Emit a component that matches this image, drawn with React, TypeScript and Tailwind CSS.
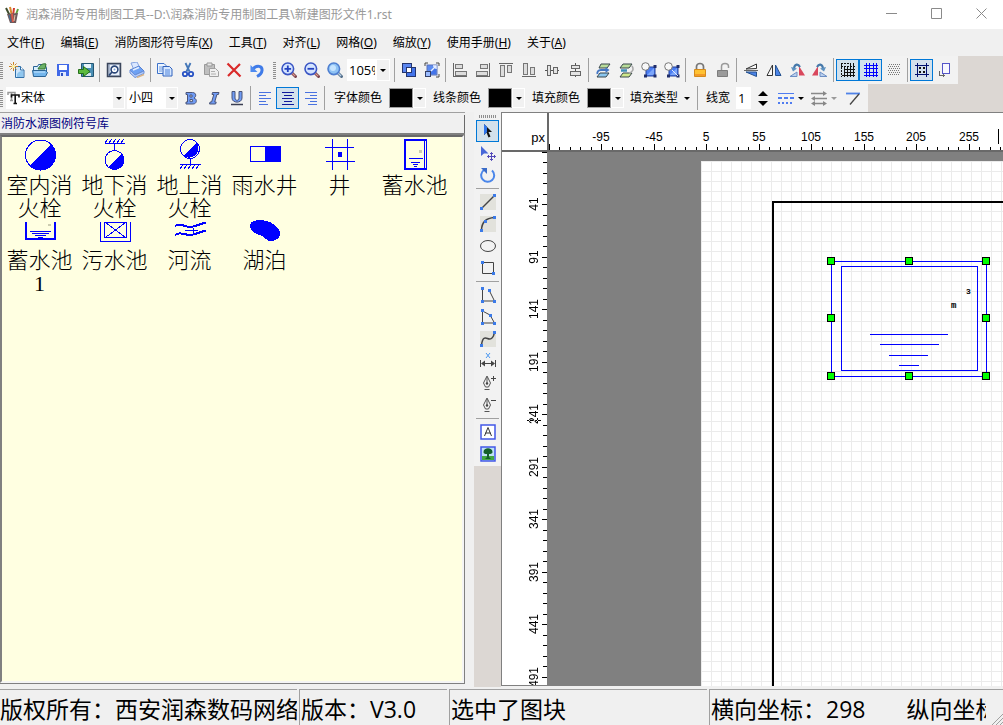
import { useEffect, useState } from 'react';
import type { ReactNode } from 'react';
import clsx from 'clsx';

interface IconProps {
  children: ReactNode;
  crisp?: boolean;
}

function Icon({ children, crisp = false }: IconProps) {
  return (
    <svg
      width="16"
      height="16"
      viewBox="0 0 16 16"
      fill="none"
      aria-hidden="true"
      className="block shrink-0"
      shapeRendering={crisp ? 'crispEdges' : 'auto'}
    >
      {children}
    </svg>
  );
}

interface ToolProps {
  label: string;
  active?: boolean;
  children: ReactNode;
}

function Tool({ label, active = false, children }: ToolProps) {
  return (
    <button
      type="button"
      title={label}
      aria-label={label}
      aria-pressed={active}
      className={clsx(
        'flex h-[22px] w-[23px] shrink-0 items-center justify-center border',
        active ? 'border-[#0078d7] bg-[#d3e1ec]' : 'border-transparent hover:bg-[#e5f1fb]',
      )}
    >
      {children}
    </button>
  );
}

function Separator() {
  return (
    <span className="flex h-6 w-[5px] shrink-0 justify-center">
      <span className="w-px bg-[#a0a0a0]" />
    </span>
  );
}

function Grip() {
  return (
    <span className="flex h-[17px] w-[3px] shrink-0 flex-col justify-between">
      {Array.from({ length: 9 }, (_, i) => (
        <span key={i} className="h-px bg-[#8f8f8f]" />
      ))}
    </span>
  );
}

function Triangle({ muted = false }: { muted?: boolean }) {
  return (
    <svg width="6" height="3" viewBox="0 0 6 3" aria-hidden="true" className="block shrink-0">
      <path d="M0 0h6L3 3z" fill={muted ? '#9a9a9a' : '#000'} />
    </svg>
  );
}

/* ---------- shared icon parts ---------- */

const magnifier = (
  <>
    <path d="M10.5 10.5l4 4" stroke="#7b4650" strokeWidth="3" strokeLinecap="round" />
    <path d="M10.8 10.8l3.4 3.4" stroke="#e09a8c" strokeWidth="1.2" />
    <circle cx="6.8" cy="6.8" r="5.8" fill="#d4e4ff" stroke="#3a55c4" strokeWidth="1.6" />
  </>
);

const groupShape = (
  <>
    <rect x="5" y="5" width="9" height="9" fill="#4a7df2" stroke="#23409c" />
    <path d="M6 13L13 6v7z" fill="#7ca6fb" />
    <path d="M12.5 3h3v3h-3zM3 12.500h3v3H3zM12.500 12.500h3v3h-3z" fill="#1f2d6a" />
    <circle cx="4.5" cy="4.5" r="3.8" fill="#f8f8f8" stroke="#777" />
  </>
);

const nib = (
  <>
    <path d="M7 1L3.5 8l2 4h3l2-4z" fill="#f4f4f4" stroke="#555" />
    <path d="M7 2v6M4.5 14.5h5" stroke="#555" />
    <circle cx="7" cy="8.5" r="1.2" fill="#444" />
  </>
);

/* ---------- toolbars ---------- */

function FileTools() {
  return (
    <>
      <Tool label="新建">
        <Icon>
          <path d="M6.5 4.5h5l3.5 3.5v7.5H6.5z" fill="#cfe6fb" stroke="#2f6fa8" />
          <path d="M8 12c2-3 4-3 6-3v6H8z" fill="#8fc6ee" />
          <path d="M11.5 4.5V8H15" fill="#fff" stroke="#2f6fa8" />
          <path d="M4.5 0v9M0 4.5h9M1.5 1.5l6 6M7.5 1.5l-6 6" stroke="#c9822b" />
          <circle cx="4.5" cy="4.5" r="1.8" fill="#fff3a8" />
        </Icon>
      </Tool>
      <Tool label="打开">
        <Icon>
          <path d="M1.500 14V4.500h4l1-2h6l2 3V9" fill="#d9efff" stroke="#2b6394" />
          <path d="M6 7c2-4 5-6 8-5l-1 5z" fill="#6cb267" stroke="#34722f" />
          <path d="M.5 8.500h13l2 2-2 4H1.500z" fill="#74b6ec" stroke="#2b6394" />
          <path d="M2 10h11" stroke="#c7e6ff" />
        </Icon>
      </Tool>
      <Tool label="保存">
        <Icon crisp>
          <path d="M2 2h12v12H2z" fill="#4169e8" />
          <path d="M4 3h8v5H4z" fill="#fff" />
          <path d="M5 10h6v4H5z" fill="#dfe8ff" />
          <path d="M6 11h2v3H6z" fill="#2e50c0" />
        </Icon>
      </Tool>
      <Tool label="导出">
        <Icon>
          <path d="M3.5 1.5h12v13h-12z" fill="#4b8fb5" stroke="#245673" />
          <path d="M6 2h7v4H6z" fill="#e7f5fb" />
          <path d="M7 11h6v3H7z" fill="#d4e6ef" />
          <path d="M.5 7.500h5V4.500l6.500 5-6.500 5v-3h-5z" fill="#5cbb3f" stroke="#256f1a" />
        </Icon>
      </Tool>
      <Separator />
      <Tool label="打印预览">
        <Icon>
          <path d="M1.5 1.5h13v13h-13z" fill="#aebbd0" stroke="#3b465b" strokeWidth="1.5" />
          <path d="M4 3h9v10H4z" fill="#e9f0fa" />
          <circle cx="8.5" cy="7.500" r="3.4" fill="#fff" stroke="#2b4778" strokeWidth="1.6" />
          <circle cx="8.5" cy="7.500" r="1" fill="#7aa2dc" />
          <path d="M6 10l-3 3.500" stroke="#2b4778" strokeWidth="1.8" />
        </Icon>
      </Tool>
      <Tool label="打印">
        <Icon>
          <path d="M2 1l6-1 3 6-6 2z" fill="#dbe8ff" stroke="#86a4e0" />
          <path d="M1 8l9-4 5 5-9 4z" fill="#6ea2f4" stroke="#5780d0" />
          <path d="M1 8v3l5 4.500 9-4V9l-9 4z" fill="#b5cdfa" stroke="#6b8fd8" />
          <path d="M4 8l6-2.500" stroke="#e6f0ff" strokeWidth="1.5" />
          <path d="M8 15.500l7-3" stroke="#d8b58a" strokeWidth="1.5" />
        </Icon>
      </Tool>
      <Separator />
      <Tool label="复制">
        <Icon>
          <path d="M.5 1.5h6.500l2 2v8H.5z" fill="#edf5ff" stroke="#3d72ca" />
          <path d="M2 5h5M2 7h5M2 9h3" stroke="#6f9be0" />
          <path d="M6 4.500h6.500l2.500 2.500v7H6z" fill="#d6e7ff" stroke="#3162bd" />
          <path d="M8 8h5M8 10h5M8 12h5" stroke="#4f83dc" />
        </Icon>
      </Tool>
      <Tool label="剪切">
        <Icon>
          <path d="M5.5 1l4 8.5M10.5 1l-4 8.5" stroke="#4477b8" strokeWidth="1.8" />
          <circle cx="5" cy="12" r="2.2" stroke="#2953c4" strokeWidth="1.8" />
          <circle cx="11" cy="12" r="2.2" stroke="#2953c4" strokeWidth="1.8" />
        </Icon>
      </Tool>
      <Tool label="粘贴">
        <Icon>
          <path d="M1.5 2.5h10v10h-10z" fill="#bfbfbf" stroke="#999" />
          <path d="M4 1h5v3H4z" fill="#e6e6e6" stroke="#999" />
          <path d="M6.5 6.5h6l3 3v5h-9z" fill="#efefef" stroke="#a0a0a0" />
          <path d="M8 9.5h4M8 12h5" stroke="#b0b0b0" />
        </Icon>
      </Tool>
      <Tool label="删除">
        <Icon>
          <path d="M1.5 1.5l13 13M14 2L2 14" stroke="#d92a2a" strokeWidth="2.2" />
        </Icon>
      </Tool>
      <Tool label="撤销">
        <Icon>
          <path d="M4 7c4-4.500 9.500-3 9 1.500-.3 3-2 4.500-5 6" stroke="#3f7be8" strokeWidth="3" />
          <path d="M1.5 3v7h7z" fill="#4d8af0" />
        </Icon>
      </Tool>
    </>
  );
}

function ViewTools() {
  return (
    <>
      <Tool label="放大">
        <Icon>
          {magnifier}
          <path d="M3.5 6.8h6.600M6.800 3.500v6.600" stroke="#2442c0" strokeWidth="1.8" />
        </Icon>
      </Tool>
      <Tool label="缩小">
        <Icon>
          {magnifier}
          <path d="M3.5 6.8h6.600" stroke="#2442c0" strokeWidth="1.8" />
        </Icon>
      </Tool>
      <Tool label="适合窗口">
        <Icon>
          <path d="M10.5 10.5l4 4" stroke="#54708c" strokeWidth="3" strokeLinecap="round" />
          <path d="M11 11l3 3" stroke="#b9d1e8" strokeWidth="1.2" />
          <circle cx="6.8" cy="6.8" r="5.8" fill="#8fc3f4" stroke="#4e7ed0" strokeWidth="1.6" />
          <circle cx="6" cy="6" r="3" fill="#c6e4ff" />
        </Icon>
      </Tool>
      <div className="ml-px mr-[2px] flex h-[22px] w-[43px] shrink-0 bg-white">
        <input
          aria-label="缩放比例"
          defaultValue="105%"
          className="w-[30px] border-r-2 border-white bg-white pl-[2px] font-['Open_Sans'] text-[13px] leading-[20px] outline-none"
        />
        <button type="button" aria-label="选择缩放比例" className="my-px flex w-3 items-center justify-center bg-[#f1f1f1]">
          <Triangle />
        </button>
      </div>
      <Separator />
      <Tool label="置于顶层">
        <Icon crisp>
          <rect x="1.5" y="1.5" width="9" height="9" fill="#5b86ef" stroke="#24356e" />
          <rect x="5.5" y="5.5" width="9" height="9" fill="#4374ea" stroke="#24356e" />
          <rect x="5.5" y="5.5" width="5" height="5" fill="#fff" stroke="#24356e" />
        </Icon>
      </Tool>
      <Tool label="置于底层">
        <Icon>
          <rect x="3" y="3" width="10" height="10" fill="#5c8bf0" stroke="#5a72b8" />
          <path d="M4 12l8-8v8z" fill="#4374ea" />
          <rect x="1.5" y="9.500" width="5" height="5" fill="#9bbcff" stroke="#344067" />
          <path d="M1 4V1h3M12 1h3v3M15 12v3h-3" stroke="#444" />
          <path d="M7 9l5-5M9 4h3v3" stroke="#e9f1ff" strokeWidth="1.4" />
        </Icon>
      </Tool>
      <Separator />
      <Tool label="左对齐">
        <Icon crisp>
          <path d="M1.5 1v14M2 14.5h13" stroke="#666" />
          <rect x="3.5" y="2.5" width="7" height="4" fill="#ddd" stroke="#777" />
          <rect x="3.5" y="9.5" width="11" height="4" fill="#ddd" stroke="#777" />
        </Icon>
      </Tool>
      <Tool label="右对齐">
        <Icon crisp>
          <path d="M14.5 1v14M1 14.5h13" stroke="#666" />
          <rect x="5.5" y="2.5" width="7" height="4" fill="#ddd" stroke="#777" />
          <rect x="1.5" y="9.5" width="11" height="4" fill="#ddd" stroke="#777" />
        </Icon>
      </Tool>
      <Tool label="顶对齐">
        <Icon crisp>
          <path d="M1 1.5h14" stroke="#666" />
          <rect x="2.5" y="3.5" width="4" height="11" fill="#ddd" stroke="#777" />
          <rect x="9.5" y="3.5" width="4" height="7" fill="#ddd" stroke="#777" />
        </Icon>
      </Tool>
      <Tool label="底对齐">
        <Icon crisp>
          <path d="M1 14.5h14" stroke="#666" />
          <rect x="2.5" y="1.5" width="4" height="11" fill="#ddd" stroke="#777" />
          <rect x="9.5" y="5.5" width="4" height="7" fill="#ddd" stroke="#777" />
        </Icon>
      </Tool>
      <Tool label="水平居中">
        <Icon crisp>
          <path d="M1 8.5h14" stroke="#555" />
          <rect x="3.5" y="3.5" width="3" height="10" fill="#e4e4e4" stroke="#666" />
          <rect x="9.5" y="5.5" width="4" height="6" fill="#e4e4e4" stroke="#666" />
        </Icon>
      </Tool>
      <Tool label="垂直居中">
        <Icon crisp>
          <path d="M8.5 1v14" stroke="#555" />
          <rect x="4.5" y="3.5" width="8" height="3" fill="#e4e4e4" stroke="#666" />
          <rect x="3.5" y="9.5" width="10" height="4" fill="#e4e4e4" stroke="#666" />
        </Icon>
      </Tool>
      <Separator />
      <Tool label="上移一层">
        <Icon>
          <path d="M6 2h9l-3 4H4z" fill="#b9dc9a" stroke="#39474d" />
          <path d="M5 11h9l-3 4H2z" fill="#8bc6ef" stroke="#39474d" />
          <path d="M12 8H6c-3 0-4 2-3.500 4" stroke="#4477c4" strokeWidth="2" />
          <path d="M14.500 8l-4-3v6z" fill="#4477c4" />
        </Icon>
      </Tool>
      <Tool label="下移一层">
        <Icon>
          <path d="M5 2h9l-3 4H2z" fill="#b9dc9a" stroke="#39474d" />
          <path d="M5 11h9l-3 4H2z" fill="#cfe88a" stroke="#39474d" />
          <path d="M3 8.500h6" stroke="#3f8fb8" strokeWidth="2.5" />
          <path d="M14 4c2 3 1 6-3 7" stroke="#aaa" strokeWidth="1.6" />
        </Icon>
      </Tool>
      <Tool label="组合">
        <Icon>{groupShape}</Icon>
      </Tool>
      <Tool label="取消组合">
        <Icon>
          {groupShape}
          <path d="M8 8l6 6" stroke="#dfe8ff" />
        </Icon>
      </Tool>
      <Separator />
      <Tool label="锁定">
        <Icon>
          <path d="M4.5 8V4.500a3.500 3 0 017 0V8" stroke="#777" strokeWidth="1.7" />
          <path d="M2.5 7.500h11v7h-11z" fill="#ffc233" stroke="#d48a1c" />
          <path d="M3 12h10v2H3z" fill="#f39a28" />
        </Icon>
      </Tool>
      <Tool label="解锁">
        <Icon>
          <path d="M6.5 8V4.500a3.500 3 0 017 0V6" stroke="#999" strokeWidth="1.5" />
          <path d="M2.5 8.500h10v6h-10z" fill="#9b9b9b" stroke="#7d7d7d" />
        </Icon>
      </Tool>
      <Separator />
      <Tool label="垂直翻转">
        <Icon>
          <path d="M13.5 2v4.500L3 7z" fill="#fafafa" stroke="#333" />
          <path d="M13.5 14.5v-4.500H3z" fill="#4c84e8" stroke="#24518f" />
          <path d="M1 8.5h14" stroke="#666" />
        </Icon>
      </Tool>
      <Tool label="水平翻转">
        <Icon>
          <path d="M6.5 3v10.500H1z" fill="#fafafa" stroke="#333" />
          <path d="M9.5 3v10.500H15z" fill="#4c84e8" stroke="#24518f" />
        </Icon>
      </Tool>
      <Tool label="向左旋转">
        <Icon>
          <path d="M10 4l6 9.500h-6z" fill="#d9485d" />
          <path d="M1 14.500h7V10z" fill="#bcd0ee" stroke="#6d8fc4" />
          <path d="M11 5C9 1.500 6 2 5 6" stroke="#4779aa" strokeWidth="2.2" />
          <path d="M2 5l2 4.500L8 6.500z" fill="#5d91c0" />
        </Icon>
      </Tool>
      <Tool label="向右旋转">
        <Icon>
          <path d="M6 4L0 13.500h6z" fill="#d9485d" />
          <path d="M15 14.500H8V10z" fill="#bcd0ee" stroke="#6d8fc4" />
          <path d="M5 5c2-3.500 5-3 6 1" stroke="#4779aa" strokeWidth="2.2" />
          <path d="M14 5l-2 4.500L8 6.500z" fill="#5d91c0" />
        </Icon>
      </Tool>
      <Separator />
      <Tool label="对齐网格" active>
        <Icon crisp>
          <path d="M4.500 5v10M7.500 5v10M10.500 1v14M13.500 1v14M4 7.500h11M4 10.500h11M2 13.500h13" stroke="#111" />
          <path d="M1.500 2v13M1 1.500h9M1 4.500h14" stroke="#111" strokeDasharray="2 1" />
        </Icon>
      </Tool>
      <Tool label="显示网格" active>
        <Icon crisp>
          <path d="M3.5 1v14M6.5 1v14M10.5 1v14M13.5 1v14M1 3.5h14M1 6.5h14M1 10.5h14M1 13.5h14" stroke="#0000ff" />
        </Icon>
      </Tool>
      <Tool label="点状网格">
        <Icon crisp>
          {[2, 4, 6, 8, 10, 12].map((y) => (
            <path key={y} d={`M${y % 4 ? 3 : 2} ${y + 0.5}h12`} stroke="#777" strokeDasharray="1 1" />
          ))}
        </Icon>
      </Tool>
      <Separator />
      <Tool label="边框" active>
        <Icon crisp>
          <path d="M3.5 1v14M12.5 1v14M1 3.5h14M1 12.5h14" stroke="#00106e" />
          <path d="M5 5h2v2H5zM9 5h2v2H9zM5 9h2v2H5zM9 9h2v2H9z" fill="#111" />
        </Icon>
      </Tool>
      <Tool label="页面方向">
        <Icon crisp>
          <path d="M5.5 1.5h7v10h-7z" fill="#f7f7ff" stroke="#5454c8" />
          <path d="M2.5 9v4.500H8M6 12v3" stroke="#666" />
        </Icon>
      </Tool>
    </>
  );
}

interface ColorPickerProps {
  label: string;
}

function ColorPicker({ label }: ColorPickerProps) {
  return (
    <>
      <span className="shrink-0 px-[7px]">{label}</span>
      <button
        type="button"
        aria-label={label}
        className="h-5 w-6 shrink-0 border border-[#a0a0a0] bg-black"
      />
      <button
        type="button"
        aria-label={`选择${label}`}
        className="flex h-5 w-[13px] shrink-0 items-center justify-center border border-white bg-[#f1f1f1]"
      >
        <Triangle />
      </button>
    </>
  );
}

function AlignIcon({ kind }: { kind: 'left' | 'center' | 'right' }) {
  const lines = {
    left: 'M2 2.5h12M2 5.5h7M2 8.5h12M2 11.5h7M2 14.5h9',
    center: 'M2 2.5h12M4 5.5h8M2 8.5h12M4 11.5h8M2 14.5h12',
    right: 'M2 2.5h12M7 5.5h7M2 8.5h12M7 11.5h7M5 14.5h9',
  };
  return (
    <Icon crisp>
      <path d={lines[kind]} stroke={kind === 'center' ? '#101a9c' : '#4a72e0'} />
    </Icon>
  );
}

function FormatTools() {
  return (
    <>
      <div className="flex h-[22px] w-[119px] shrink-0 items-center bg-white">
        <svg width="14" height="14" viewBox="0 0 14 14" aria-hidden="true" className="ml-px shrink-0">
          <path d="M1 4V1.500h7V4M4.500 1.500V9M3 9.500h3" stroke="#999" fill="none" strokeWidth="1.5" />
          <path d="M4.500 6.500V4H12v2.500M8.200 4v8M6.500 12.500H10" stroke="#111" fill="none" strokeWidth="1.6" />
        </svg>
        <select aria-label="字体" className="h-5 w-[92px] appearance-none bg-white outline-none">
          <option>宋体</option>
        </select>
        <span className="flex h-5 w-[11px] items-center justify-center bg-[#f1f1f1]">
          <Triangle />
        </span>
      </div>
      <div className="ml-[2px] mr-px flex h-[22px] w-[51px] shrink-0 items-center bg-white">
        <select aria-label="字号" className="h-5 w-[39px] appearance-none bg-white pl-[2px] outline-none">
          <option>小四</option>
        </select>
        <span className="flex h-5 w-[11px] items-center justify-center bg-[#f1f1f1]">
          <Triangle />
        </span>
      </div>
      <Tool label="加粗">
        <Icon>
          <path
            d="M3 2.500h6.500c4 0 4 4.500 1.500 5.500 3.500 1 3 6-1 6H3v-2h1.500v-7.500H3zM7 5v2h2V5zM7 9.500v2.200h2.400V9.500z"
            fill="#6f9bf5"
            stroke="#4a5478"
            fillRule="evenodd"
          />
        </Icon>
      </Tool>
      <Tool label="斜体">
        <Icon>
          <path d="M6.5 2.500H13l-.6 2h-1.500l-2.200 7.500h1.500l-.6 2H3.500l.6-2h1.500l2.200-7.500H6z" fill="#6f9bf5" stroke="#4a5478" />
        </Icon>
      </Tool>
      <Tool label="下划线">
        <Icon>
          <path d="M3 1.500h3V8c0 3 4 3 4 0V1.500h3V8c0 5.500-10 5.500-10 0z" fill="#6f9bf5" stroke="#4a5478" />
          <path d="M2 14.5h12" stroke="#3a3f52" strokeWidth="1.5" />
        </Icon>
      </Tool>
      <Separator />
      <Tool label="文字左对齐">
        <AlignIcon kind="left" />
      </Tool>
      <Tool label="文字居中" active>
        <AlignIcon kind="center" />
      </Tool>
      <Tool label="文字右对齐">
        <AlignIcon kind="right" />
      </Tool>
      <Separator />
      <ColorPicker label="字体颜色" />
      <ColorPicker label="线条颜色" />
      <ColorPicker label="填充颜色" />
      <button type="button" className="flex h-[22px] w-[71px] shrink-0 items-center gap-[6px] pl-[6px]">
        填充类型
        <Triangle />
      </button>
      <Separator />
      <label htmlFor="line-width" className="shrink-0 px-[6px]">
        线宽
      </label>
      <input
        id="line-width"
        defaultValue="1"
        className="h-[22px] w-[15px] shrink-0 bg-white pl-[2px] font-['Open_Sans'] text-[13px] outline-none"
      />
      <span className="flex h-[22px] w-6 shrink-0 flex-col items-center justify-center gap-[5px]">
        <button type="button" aria-label="增加线宽">
          <svg width="10" height="5" viewBox="0 0 10 5" className="block">
            <path d="M5 0l5 5H0z" />
          </svg>
        </button>
        <button type="button" aria-label="减小线宽">
          <svg width="10" height="5" viewBox="0 0 10 5" className="block">
            <path d="M5 5L0 0h10z" />
          </svg>
        </button>
      </span>
      <button type="button" aria-label="线型" className="flex h-[22px] w-8 shrink-0 items-center justify-center gap-1">
        <Icon crisp>
          <path d="M0 3.5h16" stroke="#4f7cf0" />
          <path d="M0 8h16" stroke="#4f7cf0" strokeWidth="2" strokeDasharray="4 2" />
          <path d="M0 13h16" stroke="#4f7cf0" strokeWidth="2" strokeDasharray="2 2" />
        </Icon>
        <Triangle />
      </button>
      <button type="button" aria-label="箭头样式" className="flex h-[22px] w-[34px] shrink-0 items-center justify-center gap-1">
        <Icon>
          <path d="M0 3.5h13M3 8.5h13M2 13.5h12" stroke="#888" strokeWidth="1.5" />
          <path d="M12 1l4 2.500L12 6zM4 6L0 8.500 4 11zM12 11l4 2.500-4 2.500zM4 11l-4 2.500L4 16z" fill="#888" />
        </Icon>
        <Triangle muted />
      </button>
      <Tool label="折线">
        <Icon>
          <path d="M1 3.5h14" stroke="#4f82e8" strokeWidth="1.8" />
          <path d="M14 4L5 14.5" stroke="#444" strokeWidth="1.3" />
        </Icon>
      </Tool>
    </>
  );
}

/* ---------- drawing tools ---------- */

const node = (x: number, y: number) => <rect key={`${x}-${y}`} x={x} y={y} width="3" height="3" fill="#3b7ae8" />;

function HorizontalRule() {
  return (
    <span className="flex h-[5px] w-[23px] flex-col justify-center">
      <span className="h-px bg-[#a0a0a0]" />
    </span>
  );
}

function DrawingTools() {
  return (
    <div className="flex w-full flex-col items-center bg-[#f2f2f2] pt-[3px] pb-px">
      <span className="mb-[2px] flex h-[3px] w-[17px] justify-between">
        {Array.from({ length: 9 }, (_, i) => (
          <span key={i} className="w-px bg-[#8f8f8f]" />
        ))}
      </span>
      <Tool label="选择" active>
        <Icon>
          <path d="M4 1v11l2.500-2.500 2 5 2-1-2-4.500H12z" fill="#111" />
          <path d="M4 1v11l3-3V4z" fill="#2e74ec" />
        </Icon>
      </Tool>
      <Tool label="移动">
        <Icon>
          <path d="M1 1v10l3-2.500h4.500z" fill="#4868d8" />
          <path d="M11.5 7.500v8M7.500 11.500h8M10 9l1.500-1.500L13 9M10 14l1.500 1.500L13 14M9 10l-1.500 1.500L9 13M14 10l1.500 1.500L14 13" stroke="#5148b8" />
        </Icon>
      </Tool>
      <Tool label="旋转">
        <Icon>
          <path d="M12 3.5A6.500 6.500 0 114 3" stroke="#4a86ea" strokeWidth="2" />
          <path d="M1 1h6v6z" fill="#3a6cc8" />
        </Icon>
      </Tool>
      <HorizontalRule />
      <Tool label="直线">
        <Icon>
          <path d="M0 0h16v16H0z" fill="#e2e2dc" />
          <path d="M1.5 14.5l13-13" stroke="#444" strokeWidth="1.5" />
          {node(0, 13)}
          {node(13, 0)}
        </Icon>
      </Tool>
      <Tool label="弧线">
        <Icon>
          <path d="M0 0h16v16H0z" fill="#e2e2dc" />
          <path d="M1.5 14.5c0-8 5-12.500 13-13" stroke="#444" strokeWidth="1.5" />
          {node(0, 13)}
          {node(4, 4)}
          {node(13, 0)}
        </Icon>
      </Tool>
      <Tool label="椭圆">
        <Icon>
          <ellipse cx="8" cy="8" rx="7.5" ry="5.5" stroke="#444" />
        </Icon>
      </Tool>
      <Tool label="矩形">
        <Icon>
          <path d="M2.5 2.5h11v11h-11z" stroke="#444" />
          {node(1, 1)}
          {node(12, 12)}
        </Icon>
      </Tool>
      <HorizontalRule />
      <Tool label="折线">
        <Icon>
          <path d="M2.5 2v12h12L9.500 4" stroke="#444" />
          {node(1, 0)}
          {node(1, 13)}
          {node(13, 13)}
          {node(8, 2)}
        </Icon>
      </Tool>
      <Tool label="多边形">
        <Icon>
          <path d="M2.5 2v12h12L10 6z" stroke="#444" />
          {node(1, 0)}
          {node(1, 13)}
          {node(13, 13)}
          {node(9, 5)}
        </Icon>
      </Tool>
      <Tool label="曲线">
        <Icon>
          <path d="M0 0h16v16H0z" fill="#e2e2dc" />
          <path d="M1.5 14c1-7 3-8 6-6.500s6 0 7-6.500" stroke="#444" strokeWidth="1.5" />
          {node(0, 13)}
          {node(13, 0)}
        </Icon>
      </Tool>
      <Tool label="标注尺寸">
        <Icon>
          <path d="M6 0l4 5M10 0L6 5" stroke="#4a96f0" />
          <path d="M.5 7v7M15.500 7v7M2 10.500h12" stroke="#444" />
          <path d="M1 10.500l4-3v6zM15 10.500l-4-3v6z" fill="#444" />
        </Icon>
      </Tool>
      <Tool label="添加节点">
        <Icon>
          {nib}
          <path d="M11 3.500h5M13.500 1v5" stroke="#444" />
        </Icon>
      </Tool>
      <Tool label="删除节点">
        <Icon>
          {nib}
          <path d="M11 3.500h5" stroke="#444" />
        </Icon>
      </Tool>
      <HorizontalRule />
      <Tool label="文字">
        <Icon>
          <path d="M1 1h14v14H1z" fill="#fff" stroke="#4358e8" strokeWidth="1.5" />
          <path d="M4.5 12L8 3.500 11.500 12M5.500 9h5" stroke="#333" />
        </Icon>
      </Tool>
      <Tool label="图片">
        <Icon>
          <path d="M1 1h14v14H1z" fill="#bfe2f5" stroke="#4358e8" strokeWidth="1.5" />
          <path d="M2 10h12v4H2z" fill="#43a843" />
          <path d="M3.5 6c0-5 9-5 9 0 0 2-3 2-3.500 2v3l2 2H5l2-2V8c-1 0-3.500 0-3.500-2z" fill="#14602a" />
        </Icon>
      </Tool>
    </div>
  );
}

/* ---------- symbol library ---------- */

const symbols: { name: string; drawing: ReactNode }[] = [
  {
    name: '室内消火栓',
    drawing: (
      <>
        <circle cx="16.5" cy="16" r="15" fill="none" stroke="#00f" />
        <path d="M5.5 27L27 5.500A15 15 0 015.500 27z" fill="#00f" />
      </>
    ),
  },
  {
    name: '地下消火栓',
    drawing: (
      <>
        <path d="M6 4.500h20M15.500 5v7M6 4l3-4M10 4l3-4M14 4l3-4M18 4l3-4M22 4l3-4" stroke="#00f" />
        <circle cx="15.5" cy="21" r="9.5" fill="none" stroke="#00f" />
        <path d="M9 28L22.500 14.500A9.500 9.500 0 019 28z" fill="#00f" />
      </>
    ),
  },
  {
    name: '地上消火栓',
    drawing: (
      <>
        <path d="M6 25.500h21M16.500 20v5M6 30l3-4M10 30l3-4M14 30l3-4M18 30l3-4M22 30l3-4" stroke="#00f" />
        <circle cx="16" cy="10" r="9.5" fill="none" stroke="#00f" />
        <path d="M9.5 17L22.500 3.500A9.500 9.500 0 019.500 17z" fill="#00f" />
      </>
    ),
  },
  {
    name: '雨水井',
    drawing: (
      <>
        <path d="M1.5 7.500h30v15h-30z" fill="none" stroke="#00f" />
        <path d="M16 7h16v16H16z" fill="#00f" />
      </>
    ),
  },
  {
    name: '井',
    drawing: (
      <>
        <path d="M8.5 0v31M23.500 0v31M1 8.500h29M2 22.500h29" stroke="#00f" />
        <path d="M14 13h4v5h-4z" fill="#00f" />
      </>
    ),
  },
  {
    name: '蓄水池',
    drawing: (
      <>
        <path d="M6 1h22M6 0v31M5 30h23" stroke="#00f" strokeWidth="2" />
        <path d="M25.5 0v31M27.500 0v31M10 19.500h14M12 23.500h9M14 25.500h5M15 27.500h3" stroke="#00f" />
        <path d="M20 11h3v3h-3z" fill="#ccccb0" />
      </>
    ),
  },
  {
    name: '蓄水池1',
    drawing: (
      <>
        <path d="M2 8v18M1 25h31M31 8v18" stroke="#00f" strokeWidth="2" />
        <path d="M6 17.500h21M8 19.500h17M11 21.500h11M14 23.500h5" stroke="#00f" />
        <path d="M24 10h3v2h-3z" fill="#ccccb0" />
      </>
    ),
  },
  {
    name: '污水池',
    drawing: (
      <path
        d="M1.5 8v19.500h30V8M5.500 8.500h22v15h-22zM7 9l19 14M26 9L7 23"
        fill="none"
        stroke="#00f"
      />
    ),
  },
  {
    name: '河流',
    drawing: (
      <>
        <path d="M1 12c5-4 9 1 15 1s10-4 16-4" fill="none" stroke="#00f" strokeWidth="2" />
        <path d="M1 21c5-4 9 0 15 0s10-4 16-4" fill="none" stroke="#00f" strokeWidth="2" />
        <path d="M11 16.500h13M19 14v5" stroke="#00f" />
      </>
    ),
  },
  {
    name: '湖泊',
    drawing: (
      <path d="M1 12c0-4 4-6 10-6 9 0 20 6 20 14 0 4-4 7-9 7-4 0-6-3-9-5C7 20 1 17 1 12z" fill="#00f" />
    ),
  },
];

function SymbolLibrary() {
  return (
    <section className="flex w-[465px] flex-col border-t border-[#a0a0a0]">
      <h2 className="mt-[2px] h-[18px] border-r border-[#696969] pl-px text-xs leading-[18px] text-[#000080]">
        消防水源图例符号库
      </h2>
      <div className="mb-[3px] min-h-0 flex-1 border-b border-r border-t-2 border-[#808080]">
        <div className="h-full overflow-hidden border-2 border-[#f5f5f5] border-l-[#808080] border-t-[#696969] bg-[#ffffe1]">
          <ul className="grid auto-rows-[75px] grid-cols-[repeat(6,75px)] pt-[2px]">
            {symbols.map(({ name, drawing }) => (
              <li key={name}>
                <button type="button" className="flex w-[75px] flex-col items-center gap-[3px]">
                  <svg width="32" height="32" viewBox="0 0 32 32" aria-hidden="true" shapeRendering="crispEdges">
                    {drawing}
                  </svg>
                  <span className="w-[70px] text-center font-['Liberation_Serif','Noto_Sans_CJK_SC',serif] text-[22px] font-light leading-[23px] break-all">
                    {name}
                  </span>
                </button>
              </li>
            ))}
          </ul>
        </div>
      </div>
    </section>
  );
}

/* ---------- work area ---------- */

// one ruler division is 10.5px, every fifth one carries a label
const STEP = 10.5;
const RULER_LEFT = 549;
const RULER_TOP = 152;
const RULER_BOTTOM = 39;

function useWindowSize() {
  const [size, setSize] = useState({ width: window.innerWidth, height: window.innerHeight });

  useEffect(() => {
    const handleResize = () => setSize({ width: window.innerWidth, height: window.innerHeight });
    window.addEventListener('resize', handleResize);
    return () => window.removeEventListener('resize', handleResize);
  }, []);

  return size;
}

function getMarks(length: number) {
  return Array.from({ length: Math.max(0, Math.ceil(length / STEP)) }, (_, i) => i);
}

function TopRuler() {
  const { width } = useWindowSize();

  return (
    <div className="overflow-hidden border-b-2 border-[#696969] bg-white">
      <svg width="100%" height="37" className="block" fontFamily="Liberation Sans" fontSize="12">
        {getMarks(width - RULER_LEFT).map((i) => {
          const x = Math.floor(i * STEP);
          const major = i % 5 === 0;
          return (
            <g key={i}>
              <rect x={x} y={major ? 31 : 34} width="1" height={major ? 6 : 3} />
              {major && i > 0 && (
                <text x={x} y="28" textAnchor="middle">
                  {i * 10 - 145}
                </text>
              )}
            </g>
          );
        })}
        <rect x="449" y="16" width="1" height="15" />
      </svg>
    </div>
  );
}

function SideRuler() {
  const { height } = useWindowSize();

  return (
    <div className="overflow-hidden border-b border-r-2 border-[#808080] bg-white">
      <svg width="45" height="100%" className="isolate block" fontFamily="Liberation Sans" fontSize="12">
        <rect width="45" height="100%" fill="#fff" />
        {getMarks(height - RULER_TOP - RULER_BOTTOM).map((i) => {
          const y = Math.floor(i * STEP);
          const major = i % 5 === 0;
          return (
            <g key={i}>
              <rect x={major ? 40 : 41} y={y} width={major ? 5 : 4} height="1" />
              {major && i > 0 && (
                <text transform={`translate(36 ${y}) rotate(-90)`} textAnchor="middle">
                  {i * 10 - 9}
                </text>
              )}
            </g>
          );
        })}
        <rect x="25" y="268" width="14" height="1" fill="#fff" className="mix-blend-difference" />
      </svg>
    </div>
  );
}

const handles = [
  [278, 105],
  [356, 105],
  [433, 105],
  [278, 162],
  [433, 162],
  [278, 220],
  [356, 220],
  [433, 220],
];

function Canvas() {
  return (
    <div className="overflow-hidden bg-[#808080]">
      <svg width="100%" height="100%" className="block" shapeRendering="crispEdges" fill="none">
        <defs>
          <pattern id="grid" x="152" y="9" width="10" height="10" patternUnits="userSpaceOnUse">
            <rect width="10" height="10" fill="#fff" />
            <path d="M0 .5h10M.5 0v10" stroke="#ebebeb" />
          </pattern>
        </defs>
        <rect x="152" y="9" width="100%" height="100%" fill="url(#grid)" />
        <rect x="224" y="50" width="1200" height="1600" stroke="#000" strokeWidth="2" />
        <g stroke="#0000ff">
          <rect x="282.5" y="109.5" width="155" height="115" />
          <rect x="292.5" y="114.5" width="136" height="104" />
          <path d="M321 182.5h78M331 192.5h59M340 203.5h39M350 213.5h20" />
        </g>
        <g fill="#000" fontFamily="Liberation Mono" fontWeight="bold">
          <text x="417" y="142" fontSize="8">
            3
          </text>
          <text x="402" y="156" fontSize="9">
            m
          </text>
        </g>
        {handles.map(([x, y]) => (
          <rect key={`${x}-${y}`} x={x + 0.5} y={y + 0.5} width="7" height="7" fill="#00ff00" stroke="#000" />
        ))}
      </svg>
    </div>
  );
}

/* ---------- window ---------- */

const menus = [
  ['文件', 'F'],
  ['编辑', 'E'],
  ['消防图形符号库', 'X'],
  ['工具', 'T'],
  ['对齐', 'L'],
  ['网格', 'O'],
  ['缩放', 'Y'],
  ['使用手册', 'H'],
  ['关于', 'A'],
];

function TitleBar() {
  return (
    <header className="flex h-[29px] shrink-0 items-center bg-white pl-[5px] text-[#999]">
      <svg width="15" height="18" viewBox="0 0 15 18" fill="none" aria-hidden="true">
        <path d="M1 2l4 8" stroke="#3d4b2c" strokeWidth="2" />
        <path d="M5 1l2 9" stroke="#d8892d" strokeWidth="2" />
        <path d="M9 2L8 10" stroke="#d33b2f" strokeWidth="2" />
        <path d="M13 3l-3 8" stroke="#5ea23a" strokeWidth="2" />
        <path d="M2 8l11-1-2 10H5z" fill="#6e5a5c" />
        <path d="M7 8l1 8" stroke="#d8584a" strokeWidth="2" />
        <path d="M10 9l-1 6" stroke="#e8c9a8" />
        <path d="M4 9l2 7" stroke="#3f6f9b" />
      </svg>
      <h1 className="min-w-0 flex-1 truncate pl-[6px] font-['Noto_Sans','Noto_Sans_CJK_SC',sans-serif] text-xs">
        润森消防专用制图工具--D:\润森消防专用制图工具\新建图形文件1.rst
      </h1>
      <button type="button" aria-label="最小化" className="flex h-full w-[46px] items-center justify-center pb-[2px]">
        <svg width="11" height="11" stroke="#8a8a8a" fill="none">
          <path d="M0 5.5h11" />
        </svg>
      </button>
      <button type="button" aria-label="最大化" className="flex h-full w-[45px] items-center justify-center pb-[2px]">
        <svg width="11" height="11" stroke="#8a8a8a" fill="none">
          <path d="M.5.5h10v10H.5z" />
        </svg>
      </button>
      <button type="button" aria-label="关闭" className="flex h-full w-[44px] items-center justify-center pb-[2px]">
        <svg width="11" height="11" stroke="#8a8a8a" fill="none">
          <path d="M.5.5l10 10M10.5.5l-10 10" />
        </svg>
      </button>
    </header>
  );
}

function StatusCell({ className, children }: { className: string; children: ReactNode }) {
  return (
    <div className={clsx('overflow-hidden whitespace-pre border-t border-[#a0a0a0]', className)}>{children}</div>
  );
}

export default function App() {
  return (
    <div className="flex h-screen flex-col overflow-hidden bg-[#f0f0f0] font-['Open_Sans','Noto_Sans_CJK_SC',sans-serif] text-xs text-black">
      <TitleBar />
      <nav className="flex h-[27px] shrink-0 items-center gap-[2px] pt-px font-['Noto_Sans','Noto_Sans_CJK_SC',sans-serif]">
        {menus.map(([name, key]) => (
          <button key={key} type="button" className="shrink-0 px-[7px]">
            {name}(<u>{key}</u>)
          </button>
        ))}
      </nav>
      <div className="shrink-0 overflow-hidden bg-[#dcd7d3]">
        <div role="toolbar" aria-label="标准" className="flex h-7 w-[958px] items-center bg-[#f2f2f2]">
          <Grip />
          <span className="w-[2px]" />
          <FileTools />
          <span className="w-[5px] shrink-0" />
          <Grip />
          <span className="w-px" />
          <ViewTools />
        </div>
        <div role="toolbar" aria-label="格式" className="flex h-7 w-[868px] items-center bg-[#f2f2f2]">
          <Grip />
          <span className="w-[3px] shrink-0" />
          <FormatTools />
        </div>
      </div>
      <main className="flex min-h-0 flex-1">
        <div className="flex w-[474px] shrink-0">
          <SymbolLibrary />
        </div>
        <aside className="w-[27px] shrink-0 bg-[#dcd7d3]">
          <DrawingTools />
        </aside>
        <section className="mb-px grid min-w-0 flex-1 grid-cols-[47px_minmax(0,1fr)] grid-rows-[39px_minmax(0,1fr)] border-l border-t border-[#808080]">
          <div className="flex items-end justify-end border-b-2 border-r-2 border-[#696969] bg-white pr-[2px] pb-[3px] font-['Liberation_Sans'] text-[13px] leading-[18px]">
            px
          </div>
          <TopRuler />
          <SideRuler />
          <Canvas />
        </section>
      </main>
      <footer className="flex h-[38px] shrink-0 gap-[2px] pt-[2px] text-[23px] leading-[39px]">
        <StatusCell className="w-[297px]">版权所有：西安润森数码网络</StatusCell>
        <StatusCell className="w-[148px] border-l pl-px">版本：V3.0</StatusCell>
        <StatusCell className="w-[258px] border-l pl-px">选中了图块</StatusCell>
        <StatusCell className="flex flex-1 justify-between border-l pl-px">
          <span className="flex w-[275px] gap-[41px] overflow-hidden">
            <span>横向坐标：298</span>
            <span>纵向坐标：</span>
          </span>
          <svg width="12" height="12" className="shrink-0 self-end" stroke="#a0a0a0">
            <path d="M1 12L12 1M5 12l7-7M9 12l3-3" />
          </svg>
        </StatusCell>
      </footer>
    </div>
  );
}
